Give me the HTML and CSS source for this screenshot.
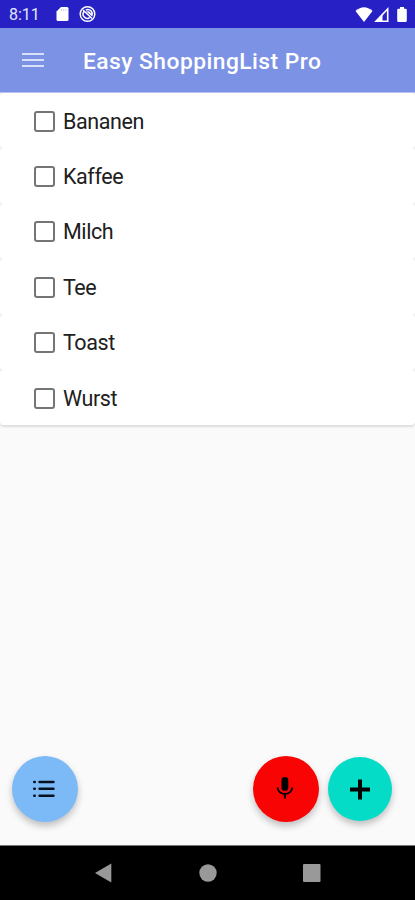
FILE: index.html
```html
<!DOCTYPE html>
<html lang="de">
<head>
<meta charset="utf-8">
<title>Easy ShoppingList Pro</title>
<link rel="stylesheet" href="styles.css">
</head>
<body>
<div class="screen">
  <div class="status">
    <span class="clock">8:11</span>
    <svg class="notifications" width="42" height="18" viewBox="0 0 42 18">
      <path fill="#fff" d="M5 2h6q1.500 0 1.500 1.500v11q0 1.500-1.500 1.500H2q-1.500 0-1.500-1.500V6.500z"/>
      <path stroke="#c5c3f2" stroke-width=".8" d="M5.500 4v2M7.700 4v2M9.900 4v2"/>
      <circle cx="31.500" cy="9" r="7.300" fill="none" stroke="#fff" stroke-width="1.500"/>
      <path fill="none" stroke="#fff" stroke-width="1.500" d="M28.200 6.200a4.300 4.300 0 0 0 5.500 6.500M29.800 5a4.300 4.300 0 0 1 5.700 6M27 5l9 8.500"/>
      <path fill="#fff" d="M30 6.300h3l2 2v2.300z"/>
    </svg>
    <svg class="system" width="52" height="18" viewBox="0 0 52 18">
      <path fill="#fff" d="M.5 6Q9-1.500 17.500 6L9 17z"/>
      <path fill="none" stroke="#fff" stroke-width="1.600" d="M32.700 4v12.200H21z"/>
      <path fill="#fff" d="M27.500 9v8H20z"/>
      <path fill="#fff" d="M45 2h4v1.800h1.500q1.300 0 1.300 1.300v10.600q0 1.300-1.300 1.300h-7q-1.300 0-1.300-1.300V5.100q0-1.300 1.300-1.300H45z"/>
    </svg>
  </div>
  <header class="appbar">
    <svg class="menu" width="23" height="18" viewBox="0 0 23 18"><path stroke="#d8dffa" stroke-width="2" d="M0 3h22M0 9h22M0 15h22"/></svg>
    <h1>Easy ShoppingList Pro</h1>
  </header>
  <main>
    <ul class="list">
      <li><span class="box"></span><span>Bananen</span></li>
      <li><span class="box"></span><span>Kaffee</span></li>
      <li><span class="box"></span><span>Milch</span></li>
      <li><span class="box"></span><span>Tee</span></li>
      <li><span class="box"></span><span>Toast</span></li>
      <li><span class="box"></span><span>Wurst</span></li>
    </ul>
    <div class="actions">
      <button class="fab lists" aria-label="Listen"><svg width="24" height="20" viewBox="0 0 24 20"><path stroke="#07121e" stroke-width="2.400" stroke-linecap="round" d="M7.500 3h14M7.500 9.800h14M7.500 16.700h14M2.200 3h.6M2.200 9.800h.6M2.200 16.700h.6"/></svg></button>
      <button class="fab voice" aria-label="Sprechen"><svg width="18" height="24" viewBox="0 0 18 24"><rect x="5.500" y="0" width="6.800" height="13.800" rx="3.400"/><path fill="none" stroke="#000" stroke-width="1.900" d="M1.600 10.500a7.300 6.500 0 0 0 14.600 0M8.900 17v4.500"/></svg></button>
      <button class="fab add" aria-label="Neu"><svg width="22" height="22" viewBox="0 0 22 22"><path stroke="#000" stroke-width="4" d="M1 11.500h20M11 1.500v20"/></svg></button>
    </div>
  </main>
  <nav class="navbar">
    <svg width="18" height="20" viewBox="0 0 18 20"><path fill="#999" d="M16.300 .5v19L0 10z"/></svg>
    <svg width="18" height="20" viewBox="0 0 18 20"><circle cx="9" cy="10" r="8.700" fill="#999"/></svg>
    <svg width="18" height="20" viewBox="0 0 18 20"><rect y="1" width="17.500" height="18" rx="1" fill="#999"/></svg>
  </nav>
</div>
</body>
</html>
```
FILE: styles.css
```css
* { box-sizing: border-box; }
body { margin: 0; font-family: Roboto, "Liberation Sans", sans-serif; }
svg { display: block; flex: none; }
.screen { width: 415px; height: 900px; display: flex; flex-direction: column; background: #fafafa; overflow: hidden; }
.status { height: 28px; display: flex; align-items: center; padding: 0 8px 0 9px; background: #2721c5; color: #e4e4fa; }
.clock { width: 47px; font-size: 16px; line-height: 28px; padding-top: 2px; }
.system { margin-left: auto; }
.appbar { height: 65px; display: flex; align-items: center; padding-left: 22px; background: #7c92e5; border-bottom: 1px solid #b6c1f0; color: #fff; }
.appbar h1 { margin: 4px 0 0 38px; font-size: 22.8px; font-weight: 500; letter-spacing: 0.47px; line-height: 30px; white-space: nowrap; }
main { flex: 1; display: flex; flex-direction: column; }
.list { list-style: none; margin: 0; padding: 0; background: #f0f0f0; box-shadow: 0 2px 2px #dedede; border-radius: 0 0 4px 4px; }
.list li { height: 55.4px; display: flex; align-items: center; padding: 1px 0 0 34px; background: #fff; border-radius: 4px; font-size: 21.5px; letter-spacing: -0.42px; color: #202020; }
.box { width: 21px; height: 21px; margin-right: 8px; border: 2px solid #757575; border-radius: 3px; }
.actions { margin-top: auto; display: flex; align-items: center; padding: 0 23px 23px 12px; }
.fab { width: 66px; height: 66px; padding: 0; border: 0; border-radius: 50%; display: flex; align-items: center; justify-content: center; box-shadow: 0 4px 7px rgba(0, 0, 0, 0.24); }
.lists { background: #7bbaf6; }
.lists svg { margin-right: 2px; }
.voice { margin-left: auto; background: #f90404; }
.voice svg { margin-right: 2px; }
.add { width: 64px; height: 64px; margin-left: 9px; background: #04dcc8; }
.navbar { height: 55px; display: flex; align-items: center; justify-content: center; gap: 86px; background: #000; border-top: 1px solid #777; }
```
